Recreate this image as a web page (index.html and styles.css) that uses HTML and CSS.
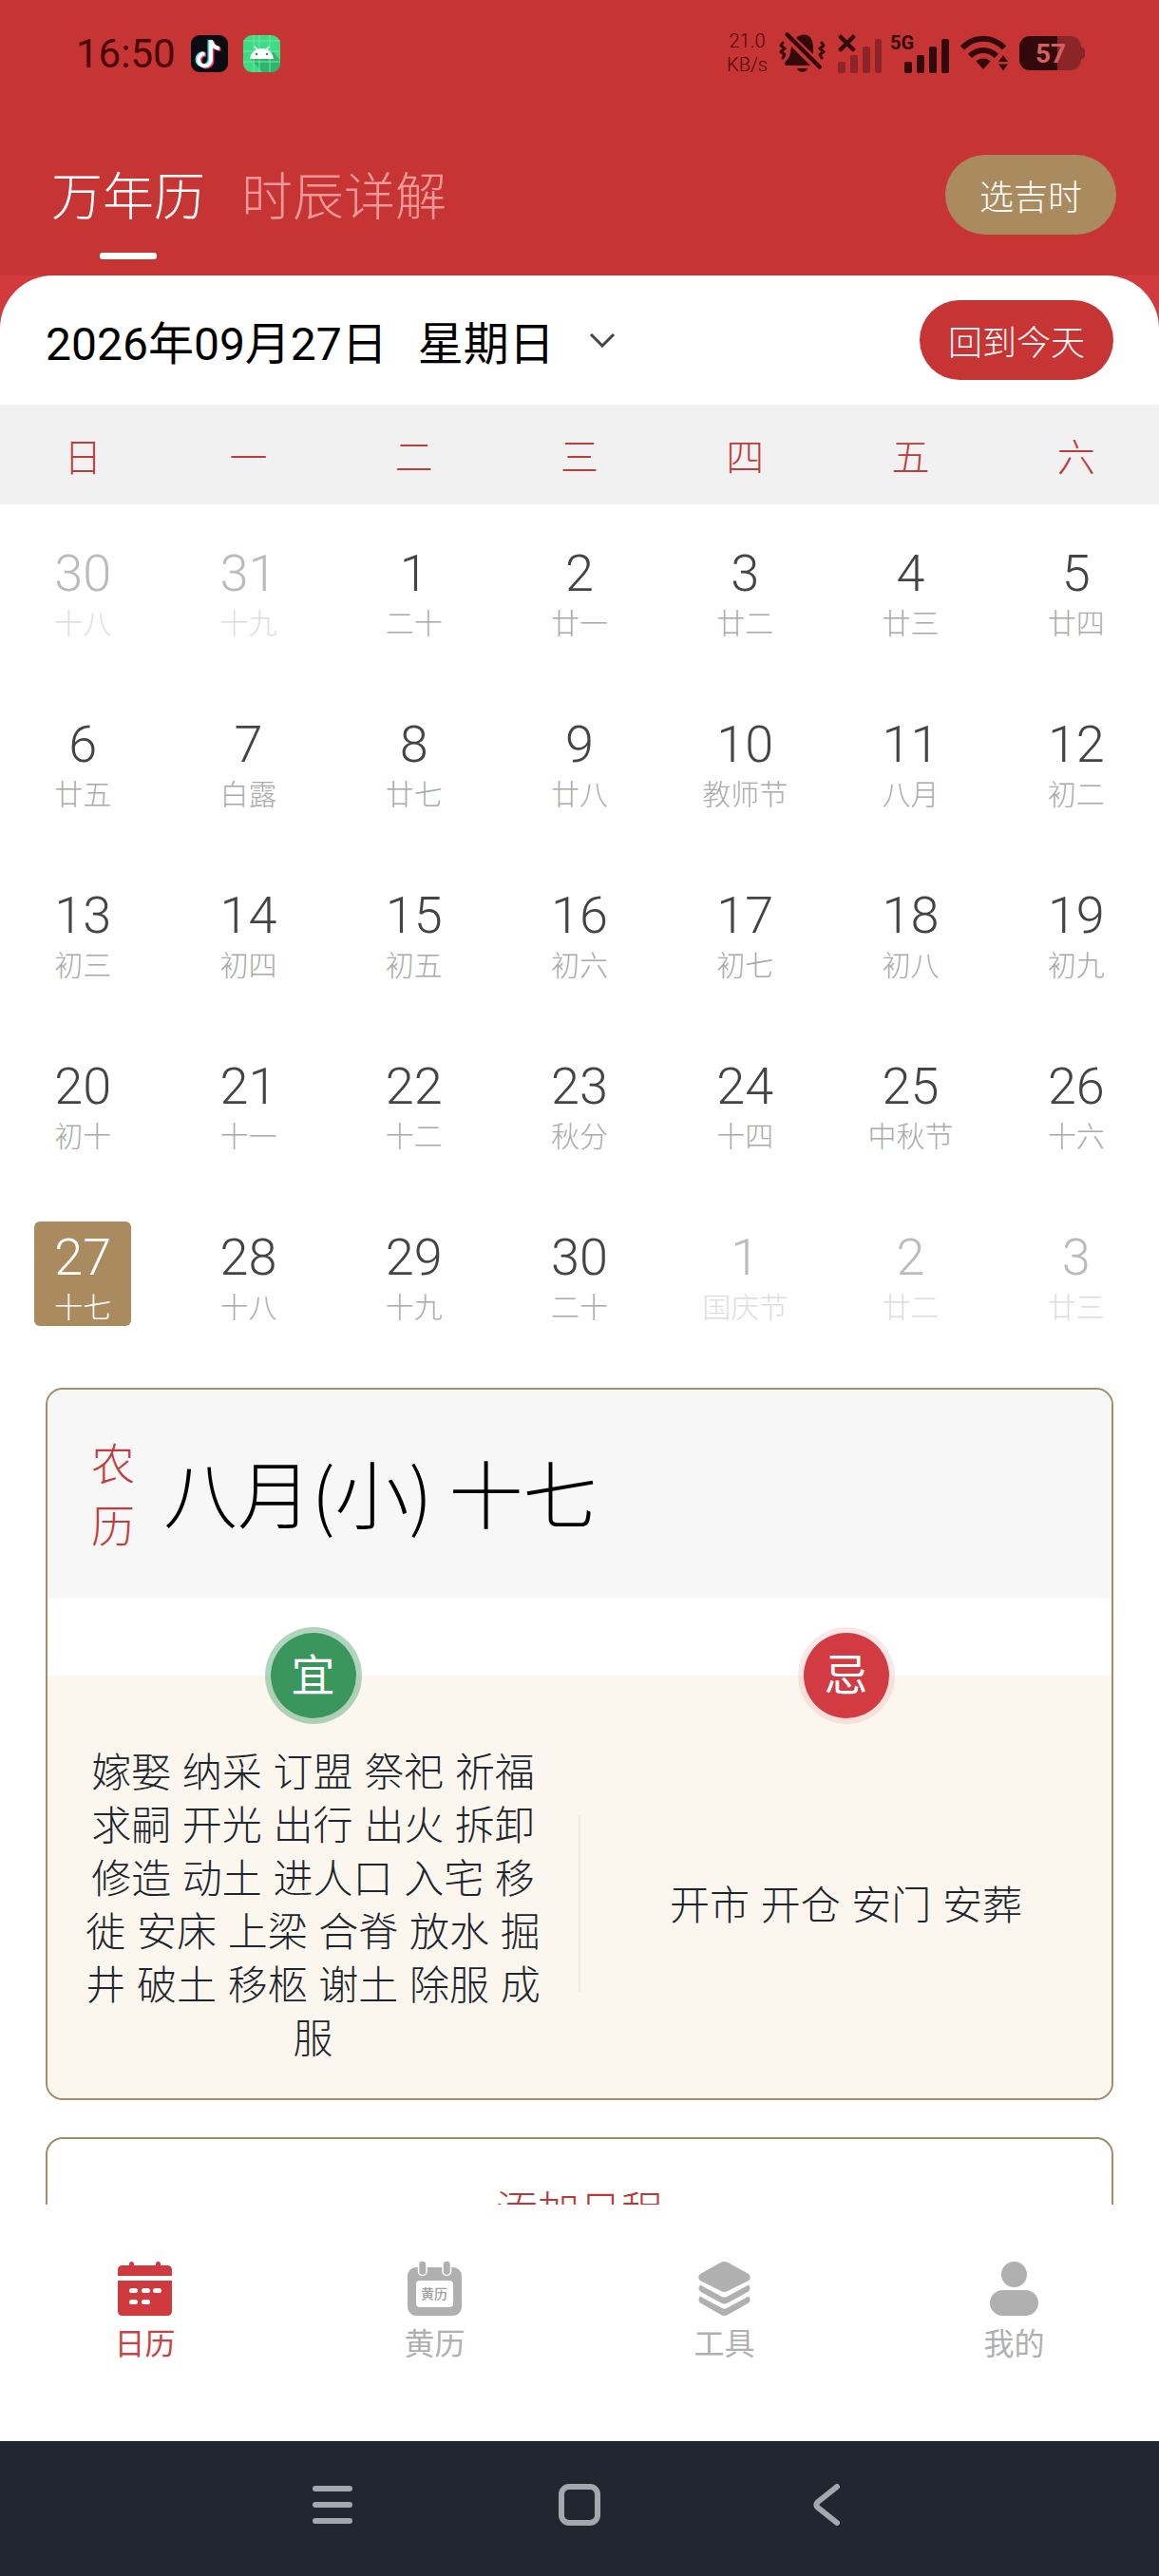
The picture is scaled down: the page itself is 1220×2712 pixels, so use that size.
FILE: index.html
```html
<!DOCTYPE html>
<html lang="zh-CN">
<head>
  <meta charset="UTF-8">
  <meta name="viewport" content="width=device-width, initial-scale=1.0">
  <title>万年历</title>
  <link rel="stylesheet" href="styles.css">
</head>
<body>
  <!-- Header -->
  <header class="header">
    <div class="status-bar">
      <div class="status-left">
        <span class="clock">16:50</span>
        <svg class="app-icon" viewBox="0 0 39 39" aria-hidden="true">
          <rect width="39" height="39" rx="9" fill="#0b0b12"/>
          <g fill="none" stroke-width="4">
            <path stroke="#3fe0e4" d="M19.500 5v20.500a6.500 6.500 0 1 1-6.500-6.500M19.500 5c1 5 4 8 9 8.500"/>
            <path stroke="#f0365a" d="M22.500 6.500v20.500a6.500 6.500 0 1 1-6.500-6.500M22.500 6.500c1 5 4 8 9 8.500"/>
            <path stroke="#fff" d="M21 5.500v20.500a6.500 6.500 0 1 1-6.500-6.500M21 5.500c1 5 4 8 9 8.500"/>
          </g>
        </svg>
        <svg class="app-icon" viewBox="0 0 39 39" aria-hidden="true">
          <rect width="39" height="39" rx="9" fill="#3ddc84"/>
          <path d="M8 25l12 14h10a9 9 0 0 0 9-9v-3l-7-9z" fill="#2fb56b"/>
          <path d="M11 0v39M17 0v39M28 0v39M0 6h39M0 17h39M0 28h39" stroke="#74e6a8" stroke-width="1"/>
          <path d="M7 25c1-7 6-11 12.500-11s11.500 4 12.500 11z" fill="#fff"/>
          <path d="M12 12l3 4M27 12l-3 4" stroke="#fff" stroke-width="1.500"/>
          <circle cx="14" cy="20" r="1.300" fill="#3a8f62"/>
          <circle cx="25" cy="20" r="1.300" fill="#3a8f62"/>
        </svg>
      </div>
      <div class="status-right">
        <div class="net-speed"><span>21.0</span><span>KB/s</span></div>
        <svg class="icon-bell" viewBox="0 0 50 44" aria-hidden="true">
          <g fill="#330a0b">
            <path d="M18 6C22 1.500 31 1 34 7c2 4 2 8 2 16z"/>
            <path d="M13 15l20 20H8c-2.500 0-2.500-3-.5-5 4.500-4 4.500-9 5.500-15z"/>
            <path d="M19 38h11c-1 5-10 5-11 0z"/>
          </g>
          <g fill="none" stroke="#330a0b" stroke-linecap="round" stroke-linejoin="round">
            <path stroke-width="4.500" d="M8.700 2.500l34 34"/>
            <path stroke-width="3" d="M4 11l-2 3 4 3-4 3.500 4 3-2 3.500M45 11l2 3-4 3 4 3.500-4 3 2 3.500"/>
          </g>
        </svg>
        <svg class="icon-signal" viewBox="0 0 47 41" aria-hidden="true">
          <g fill="#8c2528">
            <rect x="0" y="29" width="8" height="12" rx="2"/>
            <rect x="13" y="22" width="8" height="19" rx="2"/>
            <rect x="26" y="13" width="8" height="28" rx="2"/>
            <rect x="39" y="5" width="7" height="36" rx="2"/>
          </g>
          <path d="M3 3l13 13M16 3L3 16" stroke="#330a0b" stroke-width="4.500" stroke-linecap="round"/>
        </svg>
        <svg class="icon-5g" viewBox="0 0 62 41" aria-hidden="true">
          <text x="0" y="16" class="net-type">5G</text>
          <g fill="#330a0b">
            <rect x="15" y="29" width="8" height="12" rx="2"/>
            <rect x="28" y="22" width="8" height="19" rx="2"/>
            <rect x="41" y="13" width="8" height="28" rx="2"/>
            <rect x="54" y="5" width="8" height="36" rx="2"/>
          </g>
        </svg>
        <svg class="icon-wifi" viewBox="0 0 50 38" aria-hidden="true">
          <g fill="none" stroke="#330a0b" stroke-width="6">
            <path d="M2 13.500C14 .5 34 .5 46 13.500"/>
            <path d="M10 22c8-8 20-8 28 0"/>
          </g>
          <g fill="#330a0b">
            <path d="M16.500 27.500c4-4 11-4 15 0L24 36z"/>
            <path d="M45 21l5 7H40zM40 30.500h10l-5 7z"/>
          </g>
        </svg>
        <svg class="icon-battery" viewBox="0 0 69 36" aria-hidden="true">
          <path d="M11 0h43a11 11 0 0 1 11 11l4 3v8l-4 3a11 11 0 0 1-11 11H11z" fill="#8c2528"/>
          <path d="M40 0H11A11 11 0 0 0 0 11v14a11 11 0 0 0 11 11h29z" fill="#330a0b"/>
          <text x="33" y="28" class="battery-level">57</text>
        </svg>
      </div>
    </div>

    <div class="top-bar">
      <nav class="top-tabs">
        <a href="#calendar" class="active">万年历</a>
        <a href="#hours">时辰详解</a>
      </nav>
      <button type="button" class="pill pill-gold">选吉时</button>
    </div>
  </header>

  <!-- Scrolling content -->
  <main class="content">
    <section class="sheet" id="calendar">
      <div class="date-bar">
        <button type="button" class="date-picker">
          <span>2026年09月27日</span>
          <span>星期日</span>
          <svg class="chevron" viewBox="0 0 28 16" aria-hidden="true">
            <path d="M2 2l12 12L26 2" fill="none" stroke="#444" stroke-width="3"/>
          </svg>
        </button>
        <button type="button" class="pill pill-red">回到今天</button>
      </div>

      <table class="calendar">
        <thead>
          <tr><th>日</th><th>一</th><th>二</th><th>三</th><th>四</th><th>五</th><th>六</th></tr>
        </thead>
        <tbody id="days">
          <!-- Rows will be inserted here -->
        </tbody>
      </table>

      <article class="card">
        <div class="lunar-head">
          <span class="lunar-label">农历</span>
          <h1>八月(小) 十七</h1>
        </div>
        <div class="advice">
          <div class="advice-col">
            <span class="badge badge-yi">宜</span>
            <p>嫁娶 纳采 订盟 祭祀 祈福 求嗣 开光 出行 出火 拆卸 修造 动土 进人口 入宅 移徙 安床 上梁 合脊 放水 掘井 破土 移柩 谢土 除服 成服</p>
          </div>
          <div class="advice-line"></div>
          <div class="advice-col">
            <span class="badge badge-ji">忌</span>
            <p>开市 开仓 安门 安葬</p>
          </div>
        </div>
      </article>

      <article class="card card-add">
        <button type="button" class="add-btn">添加日程</button>
      </article>
    </section>
  </main>

  <!-- Bottom tabs -->
  <nav class="tab-bar">
    <a href="#calendar" class="active">
      <svg viewBox="0 0 57 57" aria-hidden="true">
        <g fill="#cf3a3e">
          <path d="M0 15V9q0-5 5-5h47q5 0 5 5v6z"/>
          <path d="M0 20h57v32q0 5-5 5H5q-5 0-5-5z"/>
          <rect x="12" width="5" height="8" rx="2.500"/>
          <rect x="40" width="5" height="8" rx="2.500"/>
        </g>
        <g fill="#fff">
          <rect x="12" y="28" width="9" height="5" rx="2.500"/>
          <rect x="25" y="28" width="9" height="5" rx="2.500"/>
          <rect x="37" y="28" width="9" height="5" rx="2.500"/>
          <rect x="12" y="40" width="9" height="5" rx="2.500"/>
          <rect x="25" y="40" width="9" height="5" rx="2.500"/>
        </g>
      </svg>
      <span>日历</span>
    </a>
    <a href="#almanac">
      <svg viewBox="0 0 57 57" aria-hidden="true">
        <rect y="6" width="57" height="51" rx="9" fill="#b0b0b0"/>
        <rect x="9" y="20" width="39" height="28" rx="4" fill="#fff"/>
        <g fill="#b0b0b0" stroke="#fff" stroke-width="1.500">
          <rect x="11.500" y="-1" width="8.500" height="15.500" rx="4"/>
          <rect x="37" y="-1" width="8.500" height="15.500" rx="4"/>
        </g>
        <text x="28" y="39" class="almanac-text">黄历</text>
      </svg>
      <span>黄历</span>
    </a>
    <a href="#tools">
      <svg viewBox="0 0 57 57" aria-hidden="true">
        <g fill="#b0b0b0">
          <path d="M25 .8q3.500-1.600 7 0L54 13q3.500 3.500 0 7L32 31q-3.500 1.800-7 0L3 20q-3.500-3.500 0-7z"/>
          <path d="M3 24.500L26 37q2.500 1 5 0l23-12.500q3 3.500 0 7L32 43.500q-3.500 1.800-7 0L3 31.500q-3-3.500 0-7z"/>
          <path d="M3 36.500L26 49q2.500 1 5 0l23-12.500q3 3.500 0 7L32 56q-3.500 1.800-7 0L3 43.500q-3-3.500 0-7z"/>
        </g>
      </svg>
      <span>工具</span>
    </a>
    <a href="#mine">
      <svg viewBox="0 0 57 57" aria-hidden="true">
        <circle cx="28.500" cy="13.500" r="13.500" fill="#b0b0b0"/>
        <rect x="3" y="30" width="51" height="27" rx="13.500" fill="#b0b0b0"/>
      </svg>
      <span>我的</span>
    </a>
  </nav>

  <!-- System navigation -->
  <footer class="system-nav">
    <button type="button" aria-label="菜单">
      <svg viewBox="0 0 44 44"><path d="M4 5h36M4 22h36M4 39h36"/></svg>
    </button>
    <button type="button" aria-label="主页">
      <svg viewBox="0 0 44 44"><rect x="3" y="3" width="38" height="38" rx="8"/></svg>
    </button>
    <button type="button" aria-label="返回">
      <svg viewBox="0 0 44 44"><path d="M33 3L13 19q-3.500 3 0 6l20 16"/></svg>
    </button>
  </footer>

  <script src="script.js"></script>
</body>
</html>
```
FILE: styles.css
```css
/* Global reset */
* {
  margin: 0;
  padding: 0;
  box-sizing: border-box;
}

body {
  display: flex;
  flex-direction: column;
  height: 100vh;
  background-color: #fff;
  color: #000;
  font-family: Roboto, "Noto Sans CJK SC", sans-serif;
  font-weight: 300;
}

button {
  border: none;
  background: none;
  color: inherit;
  font: inherit;
  cursor: pointer;
}

a {
  text-decoration: none;
}

svg {
  display: block;
  flex-shrink: 0;
}

/* Header */
.header {
  background-color: #c73434;
}

.status-bar {
  display: flex;
  justify-content: space-between;
  align-items: center;
  height: 112px;
  padding: 0 78px 0 80px;
}

.status-left {
  display: flex;
  align-items: center;
  gap: 16px;
}

.clock {
  color: #4a0507;
  font-size: 42px;
  font-weight: 400;
}

.app-icon {
  width: 39px;
  height: 39px;
}

.status-right {
  display: flex;
  align-items: center;
  gap: 12px;
}

.net-speed {
  display: flex;
  flex-direction: column;
  align-items: center;
  color: #4a0507;
  font-size: 20px;
  line-height: 25px;
}

.icon-bell {
  width: 50px;
  height: 44px;
}

.icon-signal {
  width: 47px;
  height: 41px;
}

.icon-5g {
  width: 62px;
  height: 41px;
  margin-left: -4px;
  overflow: visible;
}

.net-type {
  fill: #330a0b;
  font-size: 20px;
  font-weight: 700;
}

.icon-wifi {
  width: 50px;
  height: 38px;
}

.icon-battery {
  width: 69px;
  height: 36px;
}

.battery-level {
  fill: #d4605f;
  font-size: 28px;
  font-weight: 700;
  text-anchor: middle;
}

.top-bar {
  display: flex;
  justify-content: space-between;
  align-items: center;
  height: 178px;
  padding: 8px 45px 0 54px;
}

.top-tabs {
  display: flex;
  gap: 38px;
  padding-top: 8px;
}

.top-tabs a {
  position: relative;
  color: #f0999a;
  font-size: 54px;
  line-height: 80px;
}

.top-tabs a.active {
  color: #fff;
}

.top-tabs a.active::after {
  content: "";
  position: absolute;
  left: 50%;
  bottom: -24px;
  width: 60px;
  height: 7px;
  margin-left: -30px;
  border-radius: 3px;
  background-color: #fff;
}

.pill {
  height: 84px;
  padding: 0 30px;
  border-radius: 42px;
  color: #fff;
  font-size: 36px;
}

.pill-gold {
  padding: 0 36px;
  background-color: #aa8b5f;
}

.pill-red {
  background-color: #c73434;
}

/* Content */
.content {
  flex: 1;
  min-height: 0;
  overflow-y: auto;
  scrollbar-width: none;
  background-color: #d23a3e;
}

.sheet {
  padding-bottom: 48px;
  border-radius: 56px 56px 0 0;
  background-color: #fff;
}

.date-bar {
  display: flex;
  justify-content: space-between;
  align-items: center;
  height: 136px;
  padding: 0 48px;
}

.date-picker {
  display: flex;
  align-items: center;
  gap: 32px;
  font-size: 48px;
  font-weight: 400;
}

.chevron {
  width: 28px;
  height: 16px;
  margin-left: 4px;
}

/* Calendar */
.calendar {
  width: 100%;
  table-layout: fixed;
  border-collapse: collapse;
}

.calendar th {
  height: 105px;
  background-color: #f1f1f1;
  color: #bd3c3c;
  font-size: 40px;
  font-weight: 300;
}

.calendar td {
  height: 180px;
  text-align: center;
  vertical-align: middle;
}

.day {
  display: inline-flex;
  flex-direction: column;
  align-items: center;
  min-width: 102px;
  height: 110px;
  padding-top: 3px;
  border-radius: 6px;
  vertical-align: middle;
}

.day .num {
  height: 70px;
  color: #444;
  font-size: 54px;
  line-height: 70px;
}

.day .lunar {
  color: #aaa;
  font-size: 30px;
  line-height: 36px;
}

.day.other .num {
  color: #bbb;
}

.day.other .lunar {
  color: #ddd;
}

.day.selected {
  background-color: #aa8b5f;
}

.day.selected .num,
.day.selected .lunar {
  color: #fff;
}

/* Cards */
.card {
  margin: 30px 48px 0;
  border: 2px solid #a38d68;
  border-radius: 18px;
  overflow: hidden;
}

.lunar-head {
  display: flex;
  align-items: center;
  gap: 30px;
  height: 220px;
  padding: 4px 46px 0;
  background-color: #f7f7f7;
}

.lunar-label {
  width: 46px;
  color: #c23e3e;
  font-size: 46px;
  line-height: 65px;
}

.lunar-head h1 {
  padding-bottom: 10px;
  font-family: "Noto Sans CJK SC", sans-serif;
  font-size: 78px;
  font-weight: 300;
}

.advice {
  display: flex;
  align-items: center;
  margin-top: 81px;
  background-color: #fcf7ee;
}

.advice-col {
  position: relative;
  display: flex;
  flex: 1;
  align-self: stretch;
  align-items: center;
  justify-content: center;
  padding: 75px 34px 34px;
}

.advice-col p {
  color: #20252e;
  font-family: "Liberation Sans", "Noto Sans CJK SC", sans-serif;
  font-size: 42px;
  line-height: 56px;
  text-align: center;
}

.advice-line {
  width: 2px;
  height: 186px;
  margin-top: 34px;
  background-color: #eeeade;
}

.badge {
  position: absolute;
  top: -51px;
  left: 50%;
  width: 102px;
  height: 102px;
  margin-left: -51px;
  border: 6px solid;
  border-radius: 50%;
  background-clip: padding-box;
  color: #fff;
  font-size: 46px;
  font-weight: 400;
  line-height: 90px;
  text-align: center;
}

.badge-yi {
  border-color: rgba(58, 150, 92, 0.4);
  background-color: #3a965c;
}

.badge-ji {
  border-color: rgba(210, 59, 66, 0.12);
  background-color: #d23b42;
}

.card-add {
  margin-top: 39px;
}

.add-btn {
  width: 100%;
  padding: 45px 0;
  color: #b93838;
  font-size: 44px;
  line-height: 64px;
}

/* Bottom tabs */
.tab-bar {
  display: flex;
  height: 249px;
  background-color: #fff;
}

.tab-bar a {
  display: flex;
  flex: 1;
  flex-direction: column;
  align-items: center;
  gap: 6px;
  padding-top: 60px;
  color: #b0b0b0;
  font-size: 32px;
  font-weight: 400;
  line-height: 48px;
}

.tab-bar a.active {
  color: #c74444;
}

.tab-bar svg {
  width: 57px;
  height: 57px;
}

.almanac-text {
  fill: #a0a0a0;
  font-size: 14px;
  font-weight: 500;
  text-anchor: middle;
}

/* System navigation */
.system-nav {
  display: flex;
  justify-content: center;
  align-items: center;
  gap: 216px;
  height: 142px;
  padding-bottom: 8px;
  background-color: #212730;
}

.system-nav svg {
  width: 44px;
  height: 44px;
  fill: none;
  stroke: #a3a8af;
  stroke-width: 6;
  stroke-linecap: round;
}
```
FILE: script.js
```js
// September 2026, with the days around it
const SELECTED = 27;

const weeks = [
  [['30', '十八'], ['31', '十九'], ['1', '二十'], ['2', '廿一'], ['3', '廿二'], ['4', '廿三'], ['5', '廿四']],
  [['6', '廿五'], ['7', '白露'], ['8', '廿七'], ['9', '廿八'], ['10', '教师节'], ['11', '八月'], ['12', '初二']],
  [['13', '初三'], ['14', '初四'], ['15', '初五'], ['16', '初六'], ['17', '初七'], ['18', '初八'], ['19', '初九']],
  [['20', '初十'], ['21', '十一'], ['22', '十二'], ['23', '秋分'], ['24', '十四'], ['25', '中秋节'], ['26', '十六']],
  [['27', '十七'], ['28', '十八'], ['29', '十九'], ['30', '二十'], ['1', '国庆节'], ['2', '廿二'], ['3', '廿三']]
];

// Function to fill the calendar table
function renderDays() {
  let rowsHTML = '';
  weeks.forEach((week, row) => {
    rowsHTML += '<tr>';
    week.forEach(([num, lunar]) => {
      const day = Number(num);
      const other = (row === 0 && day > 7) || (row === weeks.length - 1 && day < 7);
      let cls = 'day';
      if (other) cls += ' other';
      if (!other && day === SELECTED) cls += ' selected';
      rowsHTML += `
        <td>
          <button type="button" class="${cls}">
            <span class="num">${num}</span>
            <span class="lunar">${lunar}</span>
          </button>
        </td>
      `;
    });
    rowsHTML += '</tr>';
  });
  document.getElementById('days').innerHTML = rowsHTML;
}

renderDays();
```
